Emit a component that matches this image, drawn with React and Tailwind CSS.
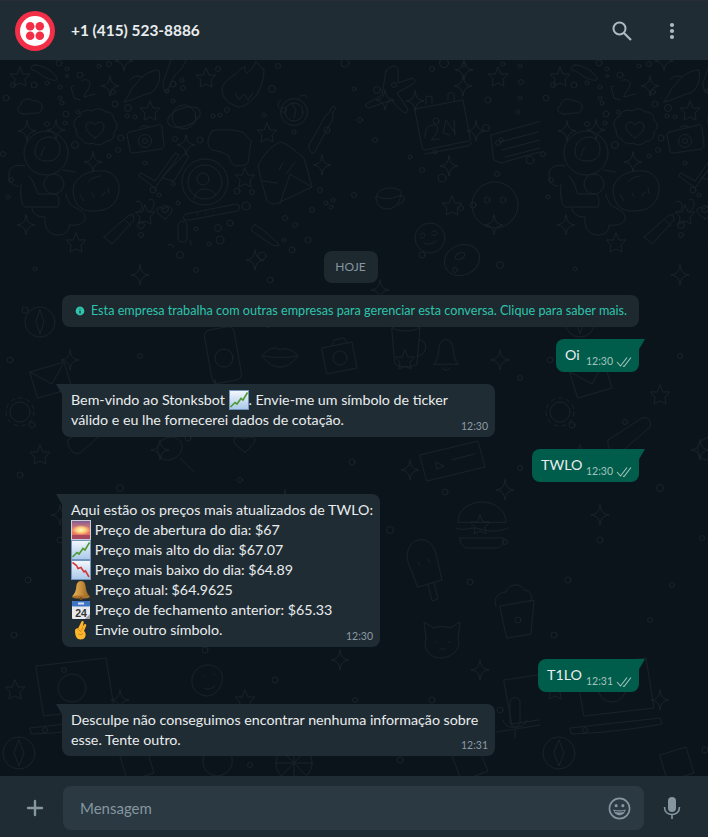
import React from "react";
import { Plus, Info } from "lucide-react";

const BASE_FONT = "font-['Lato','Noto_Sans',sans-serif]";

// small circles scattered through the wallpaper
const DOTS = [
  [6, 38, 3], [13, 25, 2.5], [34, 25, 3], [47, 23, 2], [59, 3, 3], [67, 9, 2], [80, 15, 3], [67, 16, 1.5],
  [99, 6, 2], [109, 4, 2.5], [60, 27, 2], [60, 38, 2], [62, 43, 2], [113, 32, 2.5], [115, 44, 3],
  [78, 52, 2], [66, 54, 3], [47, 64, 2.5], [65, 63, 2], [75, 85, 3.5], [121, 78, 3], [109, 96, 2],
  [118, 90, 2.5], [128, 48, 3.5], [135, 57, 2], [127, 56, 2], [173, 24, 3], [183, 28, 2.5], [182, 20, 2],
  [173, 41, 2], [167, 31, 2], [218, 9, 2.5], [213, 56, 2], [220, 55, 2], [227, 50, 2.5], [200, 80, 3],
  [175, 79, 2.5], [153, 130, 3], [145, 103, 2], [159, 135, 2], [173, 124, 2], [165, 149, 3.5], [141, 165, 3.5],
  [141, 175, 2.5], [178, 143, 2], [246, 146, 4], [230, 163, 3], [218, 168, 3.5], [196, 169, 2], [209, 184, 2],
  [220, 180, 4], [237, 131, 3], [252, 132, 2.5], [278, 6, 2.5], [272, 29, 3.5], [284, 50, 2.5], [264, 55, 2],
  [294, 72, 2], [320, 130, 2.5], [295, 165, 2.5], [285, 158, 2.5], [312, 150, 2.5], [308, 180, 3], [284, 180, 2],
  [326, 143, 2], [331, 147, 2], [333, 140, 2], [354, 135, 2.5], [327, 70, 3], [345, 3, 4], [354, 29, 2],
  [377, 30, 3.5], [394, 25, 2.5], [444, 3, 4.5], [432, 9, 2.5], [520, 6, 2], [503, 4, 2], [521, 22, 2.5],
  [520, 38, 2], [488, 40, 3], [486, 68, 3.5], [501, 80, 2], [464, 5, 2], [436, 61, 3], [518, 52, 2],
  [497, 114, 2.5], [530, 100, 4], [498, 83, 2.5], [473, 145, 3], [461, 148, 2.5], [442, 118, 4], [422, 110, 2.5],
  [435, 92, 2], [375, 80, 2.5], [410, 97, 2], [360, 60, 2.5], [11, 120, 2.5], [8, 137, 2], [3, 94, 2.5],
  [35, 209, 2], [262, 196, 4], [270, 220, 3], [292, 190, 3], [180, 195, 3.5], [196, 210, 2.5], [422, 195, 3],
  [455, 210, 2.5], [500, 205, 3.5], [25, 250, 3], [210, 248, 2.5], [86, 260, 3.5], [318, 255, 3], [392, 238, 2.5],
  [10, 300, 3], [140, 296, 2.5], [232, 340, 3.5], [268, 265, 2.5], [478, 345, 3], [520, 318, 2.5], [32, 365, 3],
  [85, 362, 2.5], [188, 378, 3], [300, 365, 3], [420, 352, 3], [466, 372, 2.5], [20, 415, 3], [120, 428, 3.5],
  [240, 420, 2.5], [352, 402, 3], [445, 432, 3], [520, 408, 2.5], [60, 480, 3], [162, 478, 2.5], [280, 462, 3],
  [390, 470, 3.5], [505, 482, 2.5], [28, 520, 3], [132, 525, 2.5], [245, 515, 3], [340, 530, 2.5], [470, 522, 3],
  [14, 575, 3], [110, 560, 2.5], [205, 590, 3], [330, 575, 2.5], [432, 640, 3], [518, 560, 3], [64, 610, 2.5],
  [275, 620, 3], [355, 640, 2.5], [500, 650, 3], [45, 670, 2.5], [165, 690, 3], [250, 705, 2.5], [400, 700, 3],
];

// 4-point star, centred on 0,0
const SPARK = "M0-10C1-3 3-1 9 0 3 1 1 3 0 10-1 3-3 1-9 0-3-1-1-3 0-10Z";
// 5-point star, centred on 0,0
const STAR = "M0-10 3-3 10-3 5 2 6 9 0 6-6 9-5 2-10-3-3-3Z";
const SPARKS = [[56, 70], [27, 71], [93, 102], [186, 85], [322, 105], [26, 165], [110, 26], [124, 1], [463, 26], [476, 71], [449, 106], [494, 165], [464, 10], [385, 40], [415, 41], [255, 200], [140, 215], [380, 230], [70, 300], [215, 330], [500, 300], [160, 390], [410, 410], [60, 455], [285, 440], [505, 430], [120, 640], [340, 600], [480, 610]];
const STARS = [[20, 17], [150, 51], [267, 73], [245, 118], [206, 18], [76, 183], [145, 155], [498, 17], [452, 146], [312, 250], [120, 335], [405, 300], [40, 395], [235, 470], [480, 465], [15, 630], [245, 640], [470, 680]];

function Doodles() {
  return (
    <g fill="none" stroke="#172127" strokeWidth="1" strokeLinecap="round" strokeLinejoin="round">
      {DOTS.map(([x, y, r], i) => <circle key={i} cx={x} cy={y} r={r} />)}
      {SPARKS.map(([x, y], i) => <path key={i} d={SPARK} transform={`translate(${x} ${y})`} />)}
      {STARS.map(([x, y], i) => <path key={i} d={STAR} transform={`translate(${x} ${y})`} />)}

      {/* astronaut */}
      <circle cx="46" cy="93" r="22" />
      <path d="M35 92c0-11 8-15 14-15s11 4 11 12c0 7-4 12-12 12-8 0-13-3-13-9Z" />
      <path d="M41 96c1-4 2-7 4-9" />
      <path d="M25 106c-8-2-17 0-16 10 0 7 5 10 9 10M21 125c-1 8 0 20 4 22h33c2-6 1-10-2-13H38c-3-8-5-14-9-18" />
      <circle cx="54" cy="124" r="10" />
      <path d="M32 148c0 6 6 9 13 9-1 8 2 18 13 18 9 0 11-6 11-10 7 1 17-1 16-8-1-7-9-8-15-13-2-4-4-7-4-10" />
      {/* cookie */}
      <path d="M74 125c5-11 16-15 31-14 9 2 13 8 14 15 1 13-7 22-16 24-11 2-20 2-26-6-3-5-5-12-3-19Z" />
      <path d="M63 110l12 2M88 122c3-4 7-5 12-6M92 133l2 4M102 136l3-4M108 128l1 5M80 135l4 6" />
      {/* cloud heart */}
      <path d="M76 70c-4-5-2-12 4-14 1-5 7-7 12-5 4-3 10-3 13 1 6-1 9 4 9 8 4 3 4 9 0 12 1 5-3 10-8 9-3 4-9 5-13 2-5 2-10 0-11-4-4 0-6-5-6-9Z" />
      <path d="M95 78c-5-4-9-7-9-11 0-6 7-6 9-2 2-4 9-4 9 2 0 4-4 7-9 11Z" />
      {/* small cloud */}
      <path d="M24 54c-7 0-8-7-3-9 0-6 8-8 12-4 5-1 10 3 9 7 0 4-4 6-9 5-3 1-6 1-9 1Z" />
      {/* 42 */}
      <path d="M80 40l-6-2-3-11 3-1M82 21c1-3 8-1 8 3 0 5-6 9-6 13l11-3" />
      {/* comet */}
      <path d="M35 5c8 0 18 6 22 13 1 4-5 2-8 1-7-2-11-8-17-9-2-2 0-5 3-5Z" />
      {/* rocket */}
      <path d="M124 42c5-6 6-13 12-18 5-8 15-14 23-14 2 8-1 18-8 23-8 1-17 7-27 9ZM130 20c3-4 8-5 12-3M171 0c-3 8-5 14-8 23 0 4 1 8 3 10l9-18c4-4 9-8 11-15" />
      {/* flaming heart */}
      <path d="M222 30c0-8 8-11 13-16 3-3 7-7 10-7-1 3 0 5 2 6 3-2 7-6 9-12 4 4 5 8 8 8 0 10-3 22-12 31-4 4-9 7-13 7-11-3-17-9-17-17ZM235 33l4 7 5-6 4 6 5-7" />
      {/* camera */}
      <path d="M130 72l28-7c3-1 4 1 4 3l2 17c0 2-2 3-3 4l-27 4c-3 0-4-1-4-3l-3-15c0-2 1-3 3-3ZM140 68l2-2h6" />
      <circle cx="145" cy="81" r="6.5" /><circle cx="145" cy="81" r="2.5" />
      {/* planet */}
      <ellipse cx="184" cy="57" rx="17" ry="9" transform="rotate(-20 184 57)" />
      <circle cx="184" cy="57" r="12" />
      {/* check marks */}
      <path d="M141 113l14 8 20-28 4 2-24 33-16-12ZM162 118l12 3 15-25-4-2Z" />
      {/* profile circle */}
      <circle cx="205" cy="122" r="23" /><circle cx="205" cy="122" r="17" />
      <circle cx="203" cy="119" r="6" />
      <path d="M194 139c1-7 6-10 10-10 5 0 10 2 12 7" />
      {/* glasses */}
      <path d="M212 71c3-2 25-2 32 2l7 8-3 22c-2 3-6 2-11 3-6-1-8-7-8-10l-8-4-8-2c-3 0-5-4-5-8 0-5 2-8 4-11Z" />
      {/* envelope */}
      <path d="M258 106c2-6 12-20 22-24 5 0 18 11 24 16l8 29-34 16c-4 2-8 1-11-3-3-10-7-23-9-34ZM280 144l10-30 22 13M263 121l14 2M279 110l4-7M287 113l8-11" />
      {/* stopwatch */}
      <circle cx="294" cy="52" r="13.5" /><circle cx="294" cy="52" r="9" />
      <path d="M292 44l4 6-2 8M281 40c-4 2-3 6-2 8M300 36l4-1 3 2" />
      {/* bottle */}
      <path d="M309 85l17-30c3-2 5-4 5-7l3-2 2 3-3 3c0 4 0 9-3 12l-16 29c-3 1-6-4-5-8Z" />
      {/* pencils */}
      <path d="M104 177l24-21 5-2 1 6-22 24-8-7ZM125 160l6 6M255 165l8 5 15 13 1 3-7-1-20-14c-2-2 1-6 3-6Z" />
      {/* band */}
      <path d="M186 160c-4 0-3-5 0-6l50-10c4 0 5 6 1 7l-47 9ZM197 154h1M205 153h1M213 151h1" />
      {/* quotes, heart, mic */}
      <path d="M136 142c3-2 6 0 6 4 0 3-3 7-5 6M149 140c3-2 5 0 5 4 0 3-2 6-4 7M165 159c-6-4-9-7-8-10 2-2 6-2 7 0 2-3 7-3 8 0 0 4-3 7-7 10ZM178 167c0-4 2-6 5-6s4 3 4 6v12c0 3-4 3-6 3-2-1-3-2-3-5ZM168 185c3-1 5-1 6 3M190 180c1 1 1 3 1 5" />
      {/* plane and calendar */}
      <path d="M386 11l-4 24-14 8c-3 1-3 5 1 5l22-8 12 12c3 2 6-1 4-4l-10-15 16-9c4-2 1-8-3-5l-12 4V11c0-3-2-5-4-5s-5 2-8 5Z" />
      <path d="M415 49l48-9 7 37c1 2 0 3-2 4l-43 9c-2 0-3-1-3-3ZM426 44v-7c1-1 5-1 6 0v6M448 40v-6c1-2 5-2 6 0v7M425 94l42-8c3 0 5-2 4-4" />
      <path d="M425 78c0-8 2-13 9-13 5 0 5 7-3 15l8-1M450 75l-7-2 3-13 9 13M454 60l1 15" />
      {/* note card */}
      <path d="M491 75l54-15 5 29-49 14-7-3ZM500 82l38-10M502 90l38-10M505 97l35-9" />
      {/* monkey */}
      <circle cx="495" cy="145" r="23" />
      <circle cx="487" cy="140" r="3" /><circle cx="503" cy="140" r="3" />
      {/* cup */}
      <path d="M376 138c0-5 5-10 14-10 7 0 10 2 11 4 0 7-3 15-12 17-10 0-12-5-13-11ZM377 136c5 3 12 4 22 0M399 136c5-2 7 2 4 6l-5 3" />
      {/* smiley */}
      <circle cx="430" cy="178" r="15" />
      <path d="M420 175c2-3 5-2 5 0 0 2-3 4-5 3M432 172c2-2 5-1 5 1s-3 3-5 2M424 183c4 2 9 1 12-2" />
      {/* doughnut */}
      <ellipse cx="462" cy="200" rx="18" ry="15" transform="rotate(-25 462 200)" />
      <ellipse cx="460" cy="196" rx="5" ry="3" transform="rotate(-25 460 196)" />

      {/* phone */}
      <rect x="208" y="268" width="30" height="54" rx="6" transform="rotate(-10 223 295)" />
      <circle cx="224" cy="298" r="9" />
      {/* lips */}
      <path d="M262 296c6-8 14-10 18-6 4-3 12-1 18 6-6 8-13 11-18 11s-12-3-18-11ZM264 296c10 2 22 2 32 0" />
      {/* camera */}
      <path d="M322 288l30-6 5 26-30 6ZM332 286l2-6 10-2 3 5" />
      <circle cx="340" cy="298" r="7" />
      {/* mug */}
      <path d="M392 268c6-4 22-4 28 0l-3 36c-4 4-18 4-22 0ZM420 280c8 0 8 16-3 16M392 268c6 4 22 4 28 0" />
      {/* bell */}
      <path d="M434 304c5-4 4-14 6-20 2-6 10-6 12 0 2 6 1 16 6 20ZM442 308c2 3 6 3 8 0" />
      {/* envelope and gear */}
      <path d="M30 312l34-10 8 26-34 10ZM30 312l22 12 12-22" />
      <circle cx="20" cy="352" r="10" /><circle cx="20" cy="352" r="14" strokeDasharray="4 4" />
      {/* compass */}
      <circle cx="40" cy="262" r="15" /><path d="M40 250l4 12-4 12-4-12Z" />
      {/* bread, magnifier, heart */}
      <path d="M68 380l34-22c6-2 10 4 8 9l-30 26c-6 3-14-6-12-13ZM160 382c8-8 20-6 22 3 1 9-8 16-16 15-8-2-11-12-6-18ZM180 398l14 14M245 392c-8-5-12-9-11-13 2-3 8-3 10 0 2-3 9-3 11 0 0 4-4 8-10 13Z" />
      {/* pin and card */}
      <path d="M330 360c0-12 18-12 18 0 0 7-9 16-9 16s-9-9-9-16ZM420 395l58-14 7 26-58 14ZM436 402l8 4-7 3ZM452 400l22-6" />
      {/* burger */}
      <path d="M458 462c0-14 14-20 24-20s24 6 24 20ZM456 468c8 4 14-2 24 1s18 3 28-1M460 478h44c0 7-4 10-8 10h-28c-4 0-8-3-8-10Z" />
      {/* popsicle */}
      <path d="M408 502c-3-10 2-20 10-22s16 4 18 14l6 26-24 7ZM428 525l4 16 6-2-4-16M418 502l2 3M428 499l2 3" />
      {/* cupcake */}
      <path d="M500 546l34-6-3 34-24 4ZM496 546c-4-8 4-14 10-14 2-8 14-10 18-2 7 0 10 8 6 12" />
      {/* cat */}
      <path d="M426 578l-2-16 10 6c5-2 11-2 16 0l10-6-2 16c3 8-2 18-16 20-14 0-19-10-16-20ZM436 582h1M449 582h1M440 588c2 2 4 2 6 0" />
      {/* laptop and coffee */}
      <path d="M36 606l70-8 8 50-70 8ZM30 668l90-10 2 6c-28 5-60 9-90 10Z" />
      <circle cx="72" cy="628" r="14" />
      <path d="M504 620l40-6 8 44-40 6ZM497 672l62-10" />
      {/* cactus, clover, mic */}
      <path d="M196 610c8-8 22-6 26 4 2 10-4 20-14 22-10 0-17-7-16-16 0-4 1-7 4-10ZM204 616l1 1M214 614l1 1M204 628c4 2 8 1 11-2M320 648c8-4 16 0 15 7 6 2 6 10 0 13 0 7-8 9-13 5-6 3-12-1-11-7-5-4-3-11 2-12 0-3 3-6 7-6ZM322 672l3 16" />
      <path d="M510 642c0-6 10-6 10 0v20c0 6-10 6-10 0ZM503 660c1 10 22 10 24 0M515 670v8" />
      <circle cx="19" cy="693" r="16" /><path d="M19 680l5 13-5 13-5-13Z" />
      {/* orange slice and hand */}
      <circle cx="294" cy="703" r="18" /><path d="M294 685v36M276 703h36M281 690l26 26M307 690l-26 26" />
      <path d="M120 695l26-8 8 26-26 8ZM208 692c8-6 20-4 24 6 2 10-6 18-16 18-8-1-14-8-13-16 0-3 2-6 5-8ZM452 695l26-8 10 24-26 10Z" />
    </g>
  );
}

function Wallpaper() {
  return (
    <svg className="absolute inset-0 w-full h-full" aria-hidden="true">
      <defs>
        <pattern id="wa-doodles" width="540" height="720" patternUnits="userSpaceOnUse">
          <Doodles />
        </pattern>
      </defs>
      <rect width="100%" height="100%" fill="url(#wa-doodles)" />
    </svg>
  );
}

function TwilioLogo() {
  return (
    <svg viewBox="0 0 40 40" className="w-10 h-10 shrink-0">
      <circle cx="20" cy="20" r="20" fill="#f22f46" />
      <circle cx="20" cy="20" r="15" fill="#fff" />
      <circle cx="15.200" cy="15.200" r="4.300" fill="#f22f46" />
      <circle cx="24.800" cy="15.200" r="4.300" fill="#f22f46" />
      <circle cx="15.200" cy="24.800" r="4.300" fill="#f22f46" />
      <circle cx="24.800" cy="24.800" r="4.300" fill="#f22f46" />
    </svg>
  );
}

function SearchIcon() {
  return (
    <svg viewBox="0 0 20 20" className="w-5 h-5" fill="none" stroke="#aebac1">
      <circle cx="7.500" cy="7.500" r="6" strokeWidth="2" />
      <path d="M12 12l7 7" strokeWidth="2.200" />
    </svg>
  );
}

function MenuIcon() {
  return (
    <svg viewBox="0 0 6 18" className="w-[6px] h-[18px]" fill="#aebac1">
      <circle cx="3" cy="3" r="2.100" />
      <circle cx="3" cy="9" r="2.100" />
      <circle cx="3" cy="15" r="2.100" />
    </svg>
  );
}

function MicIcon() {
  return (
    <svg viewBox="0 0 18 24" className="w-[18px] h-6" fill="none" stroke="#8696a0">
      <rect x="5" y="1" width="8" height="15" rx="4" fill="#8696a0" stroke="none" />
      <path d="M1.500 11c0 5 3.500 7.500 7.500 7.500s7.500-2.500 7.500-7.500" strokeWidth="1.600" />
      <path d="M9 18v5" strokeWidth="1.600" />
    </svg>
  );
}

function SmileyIcon() {
  return (
    <svg viewBox="0 0 24 24" className="w-[23px] h-[23px]" fill="none" stroke="#8696a0" strokeWidth="1.700">
      <circle cx="12" cy="12" r="10.500" />
      <circle cx="8.500" cy="9" r="1.600" fill="#8696a0" stroke="none" />
      <circle cx="15.500" cy="9" r="1.600" fill="#8696a0" stroke="none" />
      <path d="M5.500 13c4 1.200 9 1.200 13 0-.5 3.500-3.300 6-6.500 6s-6-2.500-6.500-6Z" fill="#8696a0" stroke="none" />
      <path d="M7 15c3 .8 7 .8 10 0" stroke="#2a3942" strokeWidth="1" />
    </svg>
  );
}

function DoubleCheck() {
  return (
    <svg viewBox="0 0 16 11" className="w-4 h-[11px] ml-[3px]" fill="none" stroke="#a3c4bc" strokeWidth="1.100">
      <path d="M1 6l3.500 4L11 1.500" />
      <path d="M7 10l1 .5L15 1.500" />
    </svg>
  );
}

function ChartEmoji({ down }) {
  return (
    <svg viewBox="0 0 20 20" className="w-5 h-5 inline-block align-top">
      <defs>
        <linearGradient id={down ? "chart-down" : "chart-up"} x1="0" y1="0" x2="0" y2="1">
          <stop offset="0" stopColor="#f4f8fd" />
          <stop offset="1" stopColor="#a9c8ea" />
        </linearGradient>
      </defs>
      <rect x="0.500" y="0.500" width="19" height="19" fill={`url(#${down ? "chart-down" : "chart-up"})`} stroke="#6f93bd" />
      {down
        ? <path d="M1.500 2.500l4 3 1.500 3 3-1 3 4.500 1.500-1 3.500 6" fill="none" stroke="#d23a3a" strokeWidth="1.600" />
        : <path d="M1.500 17l4.500-4.500 2 1.500 4-5.500 2 1.500 4.500-7.500" fill="none" stroke="#4f9a35" strokeWidth="1.600" />}
    </svg>
  );
}

function SunriseEmoji() {
  return (
    <svg viewBox="0 0 20 20" className="w-5 h-5 inline-block align-top">
      <defs>
        <linearGradient id="sunrise-sky" x1="0" y1="0" x2="0" y2="1">
          <stop offset="0" stopColor="#7b5a96" />
          <stop offset="0.5" stopColor="#f0816a" />
          <stop offset="1" stopColor="#d9604f" />
        </linearGradient>
        <radialGradient id="sunrise-sun">
          <stop offset="0" stopColor="#fff6c0" />
          <stop offset="0.5" stopColor="#fcd27c" />
          <stop offset="1" stopColor="#fcd27c" stopOpacity="0" />
        </radialGradient>
      </defs>
      <rect x="0.500" y="0.500" width="19" height="19" fill="url(#sunrise-sky)" stroke="#c9ced6" />
      <ellipse cx="10" cy="10" rx="9" ry="5" fill="url(#sunrise-sun)" />
      <rect x="1" y="15" width="18" height="4" fill="#a8485e" />
    </svg>
  );
}

function BellEmoji() {
  return (
    <svg viewBox="0 0 20 20" className="w-5 h-5 inline-block align-top">
      <defs>
        <linearGradient id="bell-fill" x1="0" y1="0" x2="1" y2="0">
          <stop offset="0" stopColor="#e8b45a" />
          <stop offset="0.5" stopColor="#c98f3c" />
          <stop offset="1" stopColor="#8a5a20" />
        </linearGradient>
      </defs>
      <path d="M10 1c3.500 0 4.500 3 4.800 6.500.3 3 1.200 6 4.200 9H1c3-3 3.900-6 4.200-9C5.500 4 6.500 1 10 1Z" fill="url(#bell-fill)" />
      <ellipse cx="10" cy="17" rx="9" ry="1.600" fill="#a8732c" />
      <circle cx="10" cy="18.500" r="1.500" fill="#7a4f1c" />
    </svg>
  );
}

function CalendarEmoji() {
  return (
    <svg viewBox="0 0 20 20" className="w-5 h-5 inline-block align-top">
      <rect x="1" y="1" width="18" height="18" rx="1" fill="#e8e9ec" />
      <rect x="1" y="1" width="18" height="5.500" rx="1" fill="#3f74c4" />
      <rect x="7" y="2.500" width="6" height="2" fill="#d5e2f5" />
      <text x="10" y="16.500" textAnchor="middle" fontFamily="Liberation Sans" fontWeight="700" fontSize="10.500" fill="#333">24</text>
      <path d="M14 19l5-5v5Z" fill="#9a9da3" />
    </svg>
  );
}

function FingersEmoji() {
  return (
    <svg viewBox="0 0 20 20" className="w-5 h-5 inline-block align-top">
      <path d="M4 11c0-2 1.500-3 3-2.500L10.500 1.500c.8-1.200 2.500-.5 2.200 1l-.9 4 1.400-2c1-1 2.500 0 2 1.300L13 11c1.500 1 2 3 1.500 5-.5 2.500-2.500 3.500-5 3.500-3.500 0-5.500-3.500-5.500-8.500Z" fill="#fdb52b" />
      <path d="M7 9l3 3M12 7l-2 4M7 14c2 1 4 .5 5-.5" fill="none" stroke="#c97f12" strokeWidth="0.800" />
    </svg>
  );
}

function Stamp({ time, sent }) {
  return (
    <span className={`flex items-center text-[10.5px] leading-[15px] ${sent ? "text-[#a3c4bc]" : "text-[#8b9aa3]"}`}>
      {time}
      {sent && <DoubleCheck />}
    </span>
  );
}

function SentBubble({ text, time, width }) {
  return (
    <div className={`relative self-end flex items-end justify-between h-[33px] ${width} bg-[#005c4b] rounded-lg rounded-tr-none pl-[9px] pr-[7px] text-[#e9edef] text-[14.25px]`}>
      <span className="mb-2 leading-[19px]">{text}</span>
      <span className="mb-[3px]"><Stamp time={time} sent /></span>
      <svg viewBox="0 0 7 12" className="absolute -right-[6px] top-0 w-[7px] h-3">
        <path d="M0 0h7L0 12Z" fill="#005c4b" />
      </svg>
    </div>
  );
}

function ReceivedBubble({ lines, time, size }) {
  return (
    <div className={`relative self-start ${size} bg-[#202c33] rounded-lg rounded-tl-none pl-[9px] pr-[7px] pt-[6px] text-[#e9edef] text-[14.25px] leading-5`}>
      {lines.map((line, i) => <div key={i} className="h-5 whitespace-nowrap">{line}</div>)}
      <div className="absolute right-[7px] bottom-[3px]"><Stamp time={time} /></div>
      <svg viewBox="0 0 7 12" className="absolute -left-[6px] top-0 w-[7px] h-3">
        <path d="M7 0H0L7 12Z" fill="#202c33" />
      </svg>
    </div>
  );
}

export default function App() {
  return (
    <div className={`w-[708px] h-[837px] flex flex-col overflow-hidden bg-[#0b141a] ${BASE_FONT}`}>
      {/* Header */}
      <header className="h-[60px] shrink-0 flex items-center bg-[#202c33] border-t border-[#2b2a3a] pl-[15px] pr-[33px] z-10">
        <TwilioLogo />
        <span className="ml-4 pt-[1px] text-[#e9edef] text-[15.4px] font-bold">+1 (415) 523-8886</span>
        <div className="ml-auto flex items-center gap-[37px]">
          <SearchIcon />
          <MenuIcon />
        </div>
      </header>

      {/* Conversation */}
      <main className="relative flex-1 min-h-0">
        <Wallpaper />
        <div className="relative h-full flex flex-col justify-end gap-3 pl-[62px] pr-[69px] pb-5">
          <div className="self-center h-8 w-[54px] flex items-center justify-center rounded-lg bg-[#1d282f] text-[#8696a0] text-xs">HOJE</div>
          <div className="h-8 flex items-center justify-center gap-[5px] rounded-lg bg-[#1d282f] text-[#2fc4ac] text-[12.65px]">
            <Info size={12} fill="#2fc4ac" stroke="#1d282f" strokeWidth={2.4} />
            Esta empresa trabalha com outras empresas para gerenciar esta conversa. Clique para saber mais.
          </div>
          <SentBubble text="Oi" time="12:30" width="w-[83px]" />
          <ReceivedBubble
            size="w-[433px] h-[53px]"
            time="12:30"
            lines={[
              <>Bem-vindo ao Stonksbot <ChartEmoji />. Envie-me um símbolo de ticker</>,
              "válido e eu lhe fornecerei dados de cotação.",
            ]}
          />
          <SentBubble text="TWLO" time="12:30" width="w-[107px]" />
          <ReceivedBubble
            size="w-[318px] h-[153px]"
            time="12:30"
            lines={[
              "Aqui estão os preços mais atualizados de TWLO:",
              <><SunriseEmoji /> Preço de abertura do dia: $67</>,
              <><ChartEmoji /> Preço mais alto do dia: $67.07</>,
              <><ChartEmoji down /> Preço mais baixo do dia: $64.89</>,
              <><BellEmoji /> Preço atual: $64.9625</>,
              <><CalendarEmoji /> Preço de fechamento anterior: $65.33</>,
              <><FingersEmoji /> Envie outro símbolo.</>,
            ]}
          />
          <SentBubble text="T1LO" time="12:31" width="w-[101px]" />
          <ReceivedBubble
            size="w-[433px] h-[52px]"
            time="12:31"
            lines={[
              "Desculpe não conseguimos encontrar nenhuma informação sobre",
              "esse. Tente outro.",
            ]}
          />
        </div>
      </main>

      {/* Composer */}
      <footer className="h-[61px] shrink-0 flex items-center bg-[#202c33] pt-[3px] pl-[23px] pr-6">
        <Plus size={24} className="text-[#8696a0] mr-4" strokeWidth={2.4} />
        <div className="w-[581px] h-11 flex items-center justify-between rounded-lg bg-[#2a3942] pl-[17px] pr-[13px] text-[#8696a0] text-[15px]">
          Mensagem
          <SmileyIcon />
        </div>
        <span className="ml-[19px] flex"><MicIcon /></span>
      </footer>
    </div>
  );
}
